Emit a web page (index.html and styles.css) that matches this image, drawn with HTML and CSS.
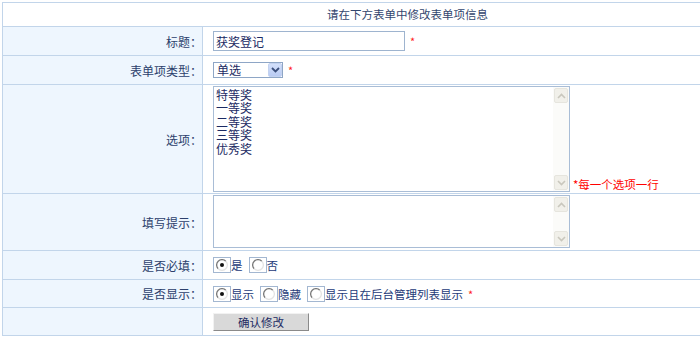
FILE: index.html
```html
<!DOCTYPE html>
<html lang="zh-CN">
<head>
<meta charset="utf-8">
<title>修改表单项</title>
<link rel="stylesheet" href="styles.css">
</head>
<body>
<div class="form">
  <div class="head">请在下方表单中修改表单项信息</div>

  <div class="label">标题：</div>
  <div class="value"><input class="text" type="text" value="获奖登记"><span class="req">*</span></div>

  <div class="label">表单项类型：</div>
  <div class="value">
    <span class="select"><span class="select-text">单选</span><span class="select-btn"><svg width="9" height="6" viewBox="0 0 9 6"><path d="M1 1 L4.5 4.5 L8 1" fill="none" stroke="#3b4f7c" stroke-width="1.8"/></svg></span></span><span class="req">*</span>
  </div>

  <div class="label row-options">选项：</div>
  <div class="value row-options bottom">
    <span class="area area-big"><textarea class="ta">特等奖
一等奖
二等奖
三等奖
优秀奖</textarea><span class="sb"><span class="sb-btn"><svg width="9" height="6" viewBox="0 0 9 6"><path d="M1 5 L4.5 1.5 L8 5" fill="none" stroke="#c9c7bd" stroke-width="1.6"/></svg></span><span class="sb-track"></span><span class="sb-btn"><svg width="9" height="6" viewBox="0 0 9 6"><path d="M1 1 L4.5 4.5 L8 1" fill="none" stroke="#c9c7bd" stroke-width="1.6"/></svg></span></span></span><span class="note">*每一个选项一行</span>
  </div>

  <div class="label row-tip">填写提示：</div>
  <div class="value row-tip top">
    <span class="area area-small"><textarea class="ta"></textarea><span class="sb"><span class="sb-btn"><svg width="9" height="6" viewBox="0 0 9 6"><path d="M1 5 L4.5 1.5 L8 5" fill="none" stroke="#c9c7bd" stroke-width="1.6"/></svg></span><span class="sb-track"></span><span class="sb-btn"><svg width="9" height="6" viewBox="0 0 9 6"><path d="M1 1 L4.5 4.5 L8 1" fill="none" stroke="#c9c7bd" stroke-width="1.6"/></svg></span></span></span>
  </div>

  <div class="label">是否必填：</div>
  <div class="value">
    <span class="radio on"><svg width="12" height="12" viewBox="0 0 12 12"><path d="M2.2 9.8 A5 5 0 0 1 9.8 2.2" fill="none" stroke="#7a7a7a" stroke-width="1.3"/><path d="M9.8 2.2 A5 5 0 0 1 2.2 9.8" fill="none" stroke="#e4e4e4" stroke-width="1.3"/><circle cx="6" cy="6" r="2" fill="#111"/></svg></span><span class="opt">是</span>
    <span class="radio"><svg width="12" height="12" viewBox="0 0 12 12"><path d="M2.2 9.8 A5 5 0 0 1 9.8 2.2" fill="none" stroke="#7a7a7a" stroke-width="1.3"/><path d="M9.8 2.2 A5 5 0 0 1 2.2 9.8" fill="none" stroke="#e4e4e4" stroke-width="1.3"/></svg></span><span class="opt">否</span>
  </div>

  <div class="label row-show">是否显示：</div>
  <div class="value row-show">
    <span class="radio on"><svg width="12" height="12" viewBox="0 0 12 12"><path d="M2.2 9.8 A5 5 0 0 1 9.8 2.2" fill="none" stroke="#7a7a7a" stroke-width="1.3"/><path d="M9.8 2.2 A5 5 0 0 1 2.2 9.8" fill="none" stroke="#e4e4e4" stroke-width="1.3"/><circle cx="6" cy="6" r="2" fill="#111"/></svg></span><span class="opt">显示</span>
    <span class="radio"><svg width="12" height="12" viewBox="0 0 12 12"><path d="M2.2 9.8 A5 5 0 0 1 9.8 2.2" fill="none" stroke="#7a7a7a" stroke-width="1.3"/><path d="M9.8 2.2 A5 5 0 0 1 2.2 9.8" fill="none" stroke="#e4e4e4" stroke-width="1.3"/></svg></span><span class="opt">隐藏</span>
    <span class="radio"><svg width="12" height="12" viewBox="0 0 12 12"><path d="M2.2 9.8 A5 5 0 0 1 9.8 2.2" fill="none" stroke="#7a7a7a" stroke-width="1.3"/><path d="M9.8 2.2 A5 5 0 0 1 2.2 9.8" fill="none" stroke="#e4e4e4" stroke-width="1.3"/></svg></span><span class="opt last">显示且在后台管理列表显示</span><span class="req">*</span>
  </div>

  <div class="label row-btn"></div>
  <div class="value row-btn"><button class="btn" type="button">确认修改</button></div>
</div>
</body>
</html>
```

FILE: styles.css
```css
html, body {
  margin: 0;
  padding: 0;
  overflow: hidden;
  background: #fff;
}

body {
  font-family: "Noto Sans CJK SC", "Liberation Sans", sans-serif;
  font-size: 11.5px;
  color: #2c3f6c;
}

.form {
  margin: 2px 0 0 2px;
  width: 811px;
  display: grid;
  grid-template-columns: 200px 1fr;
  grid-template-rows: 24px 29px 29px 109px 57px 29px 28px 28px;
  border: 1px solid #c2d5ea;
  border-bottom: 0;
  box-sizing: border-box;
}

.head {
  grid-column: 1 / -1;
  border-bottom: 1px solid #c2d5ea;
  text-align: center;
  line-height: 23px;
  color: #33466e;
  background: #fff;
}

.label,
.value {
  border-bottom: 1px solid #c2d5ea;
  display: flex;
  align-items: center;
  box-sizing: border-box;
}

.label {
  font-family: "Noto Sans CJK TC", "Noto Sans CJK SC", sans-serif;
  font-size: 12px;
  background: #eef6fe;
  border-right: 1px solid #c2d5ea;
  justify-content: flex-end;
  padding-right: 0;
}

.value {
  padding-left: 10px;
  background: #fff;
}

.value.bottom {
  align-items: flex-end;
  padding-bottom: 1px;
}

.value.top {
  align-items: flex-start;
  padding-top: 1px;
}

.text {
  width: 192px;
  height: 20px;
  box-sizing: border-box;
  border: 1px solid #9eb4cf;
  padding: 0 2px;
  margin: 0;
  font-family: inherit;
  font-size: 12px;
  color: #1b2a63;
  outline: none;
}

.req {
  color: #f22;
  font-size: 11px;
  margin-left: 5px;
}

.select {
  display: inline-flex;
  width: 70px;
  height: 16px;
  box-sizing: border-box;
  border: 1px solid #8ea6c6;
  background: #fff;
  align-items: stretch;
}

.select-text {
  flex: 1;
  padding-left: 3px;
  line-height: 14px;
  font-size: 12px;
  color: #1b2a63;
}

.select-btn {
  width: 14px;
  background: linear-gradient(#d3e0fb, #b9cbf3);
  border: 1px solid #c3d2f0;
  border-radius: 2px;
  box-sizing: border-box;
  display: flex;
  align-items: center;
  justify-content: center;
}

.area {
  display: inline-flex;
  width: 357px;
  box-sizing: border-box;
  border: 1px solid #a9bdd6;
  background: #fff;
}

.area-big { height: 106px; }
.area-small { height: 53px; }

.ta {
  flex: 1;
  border: 0;
  margin: 0;
  padding: 1px 2px;
  resize: none;
  outline: none;
  overflow: hidden;
  font-family: inherit;
  font-size: 12px;
  line-height: 13.4px;
  color: #1b2a63;
  background: transparent;
}

.sb {
  width: 16px;
  display: flex;
  flex-direction: column;
  background: #fbfbf9;
  padding: 1px 0;
  box-sizing: border-box;
}

.sb-btn {
  height: 15px;
  margin: 0 1px;
  background: #f1f0ea;
  border: 1px solid #e6e5de;
  border-radius: 2px;
  box-sizing: border-box;
  display: flex;
  align-items: center;
  justify-content: center;
}

.sb-track { flex: 1; }

.note {
  color: #f00;
  margin-left: 3px;
  line-height: 16px;
}

.radio {
  display: inline-flex;
  width: 18px;
  height: 16px;
  box-sizing: border-box;
  border: 1px solid #a3b7d1;
  padding: 1px 0 0 2px;
  align-items: flex-start;
}

.opt {
  margin-right: 6px;
  color: #243a78;
}

.opt.last {
  margin-right: 0;
}

.btn {
  width: 96px;
  height: 18px;
  margin: 0;
  padding: 0;
  background: #d9d9d9;
  border: 1px solid;
  border-color: #f2f2f2 #8a8a8a #8a8a8a #f2f2f2;
  font-family: inherit;
  font-size: 11.5px;
  line-height: 16px;
  color: #1c2a62;
}
```
